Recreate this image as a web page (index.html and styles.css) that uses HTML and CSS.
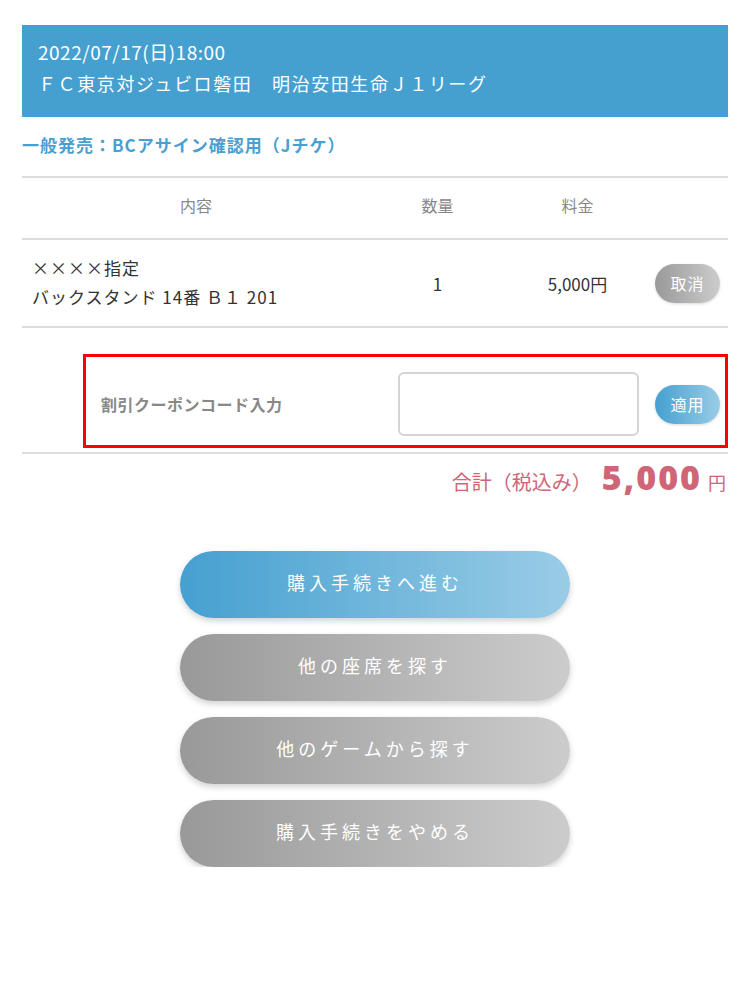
FILE: index.html
```html
<!DOCTYPE html>
<html lang="ja">
<head>
    <meta charset="UTF-8">
    <title>購入内容確認</title>
    <link rel="stylesheet" href="styles.css">
</head>
<body>
<div class="page">
    <div class="game">
        <p class="game-date">2022/07/17(日)18:00</p>
        <p class="game-title">ＦＣ東京対ジュビロ磐田　明治安田生命Ｊ１リーグ</p>
    </div>
    <p class="sale">一般発売：BCアサイン確認用（Jチケ）</p>

    <div class="cart">
        <div class="row head">
            <div class="c-name">内容</div>
            <div class="c-qty">数量</div>
            <div class="c-price">料金</div>
            <div class="c-act"></div>
        </div>
        <div class="row item">
            <div class="c-name">
                <p>××××指定</p>
                <p>バックスタンド 14番 Ｂ１ 201</p>
            </div>
            <div class="c-qty">1</div>
            <div class="c-price">5,000円</div>
            <div class="c-act"><button class="pill gray">取消</button></div>
        </div>
        <div class="coupon-wrap">
            <div class="coupon">
                <div class="coupon-label">割引クーポンコード入力</div>
                <input class="coupon-input" type="text">
                <button class="pill blue">適用</button>
            </div>
        </div>
    </div>

    <div class="total">
        <span class="total-label">合計（税込み）</span>
        <span class="total-num">5,000</span>
        <span class="total-yen">円</span>
    </div>

    <div class="actions">
        <button class="btn blue">購入手続きへ進む</button>
        <button class="btn gray">他の座席を探す</button>
        <button class="btn gray">他のゲームから探す</button>
        <button class="btn gray">購入手続きをやめる</button>
    </div>
</div>
</body>
</html>
```

FILE: styles.css
```css
* {
    padding: 0;
    margin: 0;
    box-sizing: border-box;
}

body {
    background: #fff;
    font-family: "Noto Sans CJK JP", "Noto Sans", sans-serif;
    color: #333;
}

.page {
    width: 706px;
    margin: 0 auto;
    padding-top: 25px;
}

.game {
    background-color: #45a0d0;
    color: #fff;
    padding: 13px 16px 17px;
    height: 92px;
}

.game-date {
    font-size: 19px;
    line-height: 28px;
    letter-spacing: 0.5px;
}

.game-title {
    font-size: 18px;
    line-height: 34px;
    letter-spacing: 1.6px;
}

.sale {
    color: #4a9fd0;
    font-weight: bold;
    font-size: 17px;
    line-height: 24px;
    letter-spacing: 1px;
    padding: 16px 0 0;
    height: 59px;
}

.cart {
    border-top: 2px solid #ddd;
}

.row {
    display: flex;
    align-items: center;
    border-bottom: 2px solid #ddd;
}

.head {
    height: 62px;
    color: #888;
    font-size: 16px;
    padding-bottom: 6px;
}

.item {
    height: 88px;
    font-size: 17px;
    color: #333;
}

.c-name {
    width: 348px;
}

.head .c-name {
    text-align: center;
}

.item .c-name {
    padding-left: 10px;
    padding-bottom: 3px;
    line-height: 29px;
    letter-spacing: 1px;
}

.c-qty {
    width: 135px;
    text-align: center;
}

.c-price {
    width: 145px;
    text-align: center;
}

.c-act {
    flex: 1;
    display: flex;
    justify-content: flex-end;
    padding-right: 8px;
}

.pill {
    border: none;
    width: 65px;
    height: 39px;
    border-radius: 20px;
    color: #fff;
    font-family: inherit;
    font-size: 16px;
    letter-spacing: 1px;
    box-shadow: 0 1px 3px rgba(0, 0, 0, 0.15);
}

.pill.gray {
    background: linear-gradient(to right, #999, #ccc);
}

.pill.blue {
    background: linear-gradient(to right, #45a0d0, #9acce6);
}

.coupon-wrap {
    padding: 26px 0 4px 61px;
    border-bottom: 2px solid #ddd;
}

.coupon {
    border: 3px solid #f00;
    height: 94px;
    display: flex;
    align-items: center;
    padding: 6px 5px 0 15px;
}

.coupon-label {
    width: 297px;
    color: #888;
    font-weight: bold;
    font-size: 16px;
    letter-spacing: 0.5px;
}

.coupon-input {
    width: 241px;
    height: 64px;
    border: 2px solid #d4d4d4;
    border-radius: 6px;
    margin-right: auto;
    outline: none;
}

.total {
    display: flex;
    justify-content: flex-end;
    align-items: baseline;
    color: #d06578;
    padding: 0;
    height: 97px;
}

.total-label {
    font-size: 20px;
}

.total-num {
    font-family: "Open Sans", sans-serif;
    font-weight: 800;
    font-size: 34px;
    letter-spacing: 2px;
    margin: 0 6px 0 10px;
}

.total-yen {
    font-size: 18px;
    margin-right: 2px;
}

.actions {
    display: flex;
    flex-direction: column;
    align-items: center;
    gap: 16px;
}

.btn {
    border: none;
    width: 390px;
    height: 67px;
    border-radius: 34px;
    color: #fff;
    font-family: inherit;
    font-size: 18px;
    letter-spacing: 4px;
    padding-bottom: 6px;
    box-shadow: 0 3px 6px rgba(0, 0, 0, 0.18);
}

.btn.blue {
    background: linear-gradient(to right, #45a0d0, #9acce6);
}

.btn.gray {
    background: linear-gradient(to right, #999, #ccc);
}
```
